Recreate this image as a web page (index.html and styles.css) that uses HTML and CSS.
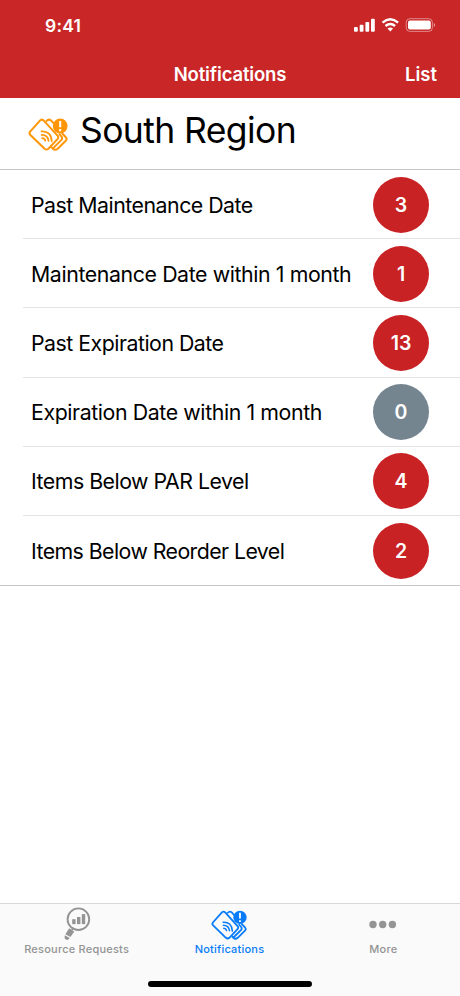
FILE: index.html
```html
<!DOCTYPE html>
<html lang="en">
<head>
<meta charset="utf-8">
<title>Notifications</title>
<link rel="stylesheet" href="styles.css">
</head>
<body>
<svg class="defs" aria-hidden="true">
  <symbol id="tags" viewBox="8 13 40 33">
    <g fill="none" stroke="currentColor" stroke-width="2" stroke-linejoin="round" stroke-linecap="round">
      <path d="M20.4 15.2 10.1 26.7Q8.8 28.4 10.4 30L24.6 43.7Q26.6 45.3 28.4 43.7L37.7 33.9Q38.9 32.3 37.5 30.7L24 15.8Q22.1 13.8 20.4 15.2Z"/>
      <path d="M26.6 15.9Q28.8 13.5 31 15.5L33.8 18.4"/>
      <path d="M42.3 28.5 46 32.5Q47.2 34 46 35.5L37.7 43.7Q35 45.8 32.9 43.7L31.9 42.6M39.4 29.2 41.5 31.7Q42.8 33.3 41.5 34.9L33.2 43.1"/>
      <path d="M21.5 26.4Q31.3 26 31.7 36.3M21.7 29.9Q27.8 30 28.5 35.8M22.2 33.2Q24.8 33.4 25.3 35.7" stroke-width="1.7"/>
    </g>
    <circle cx="40.2" cy="21" r="7.4" fill="currentColor"/>
    <path d="M40.2 16v6.2M40.2 24.1v2.2" fill="none" stroke="#fff" stroke-width="2"/>
  </symbol>
</svg>
<header class="top">
  <div class="status">
    <span class="time">9:41</span>
    <svg class="system" viewBox="0 0 82 16" width="82" height="16">
      <g fill="#fff">
        <rect x="0" y="10.1" width="3.8" height="4.6" rx="1"/>
        <rect x="5.7" y="7.8" width="3.8" height="6.9" rx="1"/>
        <rect x="11.4" y="5" width="3.8" height="9.7" rx="1"/>
        <rect x="17" y="1.8" width="3.8" height="12.9" rx="1"/>
        <path d="M36.3 14.4 33.5 11.6Q36.3 9.4 39.1 11.6Z"/>
        <rect x="54" y="3.4" width="22.8" height="9.2" rx="2"/>
      </g>
      <path d="M28.5 5.6Q36.3-1.1 44.1 5.6M31.5 9Q36.3 5 41.1 9" fill="none" stroke="#fff" stroke-width="2.4"/>
      <rect x="52.2" y="1.7" width="26.2" height="12.7" rx="3.7" fill="none" stroke="#fff" stroke-opacity=".45"/>
      <path d="M79.8 5.9v4.2q1.4-.6 1.4-2.1t-1.4-2.1" fill="#fff" fill-opacity=".5"/>
    </svg>
  </div>
  <nav class="nav">
    <h1 class="title">Notifications</h1>
    <a class="list-link">List</a>
  </nav>
</header>
<main>
  <div class="region">
    <svg class="region-icon"><use href="#tags"/></svg>
    <h2 class="region-name">South Region</h2>
  </div>
  <ul class="rows">
    <li class="row"><span class="label">Past Maintenance Date</span><span class="badge">3</span></li>
    <li class="row"><span class="label wide">Maintenance Date within 1 month</span><span class="badge">1</span></li>
    <li class="row"><span class="label">Past Expiration Date</span><span class="badge">13</span></li>
    <li class="row"><span class="label wide">Expiration Date within 1 month</span><span class="badge zero">0</span></li>
    <li class="row"><span class="label">Items Below PAR Level</span><span class="badge">4</span></li>
    <li class="row"><span class="label tight">Items Below Reorder Level</span><span class="badge">2</span></li>
  </ul>
</main>
<footer class="tabs">
  <div class="tab-list">
    <a class="tab">
      <svg class="tab-icon" viewBox="0 0 32 36" width="32" height="36">
        <circle cx="17.4" cy="14.2" r="10.8" fill="none" stroke="currentColor" stroke-width="1.9"/>
        <g fill="currentColor">
          <rect x="11.2" y="14.2" width="3.4" height="4.9"/>
          <rect x="16" y="12" width="3.4" height="7.1"/>
          <rect x="20.8" y="9.1" width="3.4" height="10"/>
          <path d="M8.2 23.3 13.3 26.4 9.4 32 4.4 29.2Z"/>
          <path d="M3.9 30.2 8.6 33Q6.8 35.8 4.8 34.5 2.8 32.9 3.9 30.2Z"/>
        </g>
        <path d="M11 24.8 12.4 22.4" stroke="currentColor" stroke-width="2"/>
      </svg>
      <span class="tab-label">Resource Requests</span>
    </a>
    <a class="tab active">
      <svg class="tab-icon tags-icon"><use href="#tags"/></svg>
      <span class="tab-label">Notifications</span>
    </a>
    <a class="tab">
      <svg class="tab-icon" viewBox="0 0 32 36" width="32" height="36">
        <g fill="currentColor"><circle cx="6" cy="19.5" r="3.7"/><circle cx="15.7" cy="19.5" r="3.7"/><circle cx="25.4" cy="19.5" r="3.7"/></g>
      </svg>
      <span class="tab-label">More</span>
    </a>
  </div>
  <div class="home"></div>
</footer>
</body>
</html>
```
FILE: styles.css
```css
* { box-sizing: border-box; }
body {
  margin: 0;
  height: 996px;
  display: flex;
  flex-direction: column;
  background: #fff;
  color: #000;
  font-family: Inter, sans-serif;
  overflow: hidden;
}
.defs { position: absolute; width: 0; height: 0; }
.top { height: 98px; background: #c82627; color: #fff; }
.status {
  height: 50px;
  padding: 0 24px 0 45px;
  display: flex;
  justify-content: space-between;
  align-items: center;
}
.time { font-size: 17.5px; font-weight: 600; letter-spacing: .2px; }
.system { display: block; }
.nav {
  height: 48px;
  padding-right: 23px;
  display: grid;
  grid-template-columns: 1fr auto 1fr;
  align-items: center;
}
.title { grid-column: 2; margin: 0 -11px 0 12px; font-size: 18.5px; font-weight: 600; letter-spacing: -.15px; }
.list-link { justify-self: end; font-size: 18.5px; font-weight: 600; }
main { flex: 1; }
.region {
  height: 72px;
  padding: 0 0 5px 28px;
  display: flex;
  align-items: center;
  border-bottom: 1px solid #c6c6c8;
}
.region-icon { width: 40px; height: 33px; color: #ff9608; margin-top: 6px; }
.region-name { margin: 0 0 2px 12px; font-size: 35.5px; font-weight: 400; letter-spacing: -.6px; }
.rows { list-style: none; margin: 0; padding: 0; border-bottom: 1px solid #c6c6c8; }
.row {
  height: 69.2px;
  margin-left: 23px;
  padding: 1px 31px 0 8px;
  display: flex;
  align-items: center;
  justify-content: space-between;
  border-bottom: 1px solid #e4e4e6;
}
.row:last-child { border-bottom: 0; }
.label { font-size: 21.3px; letter-spacing: -.49px; white-space: nowrap; }
.wide { letter-spacing: -.39px; }
.tight { letter-spacing: -.56px; }
.badge {
  width: 56px;
  height: 56px;
  flex: none;
  border-radius: 50%;
  background: #c82224;
  color: #fff;
  display: grid;
  place-items: center;
  font-size: 19.5px;
  font-weight: 600;
}
.zero { background: #758590; }
.tabs { height: 93px; border-top: 1px solid #d7d7d7; background: #fafafa; }
.tab-list { display: grid; grid-template-columns: repeat(3, 1fr); }
.tab { display: flex; flex-direction: column; align-items: center; color: #949494; }
.active { color: #087cf8; }
.tab-icon { display: block; height: 36px; width: 32px; margin-top: 1px; }
.tags-icon { width: 36px; height: 30px; margin: 6px 2px 1px 0; }
.tab-label { font-size: 11px; line-height: 16px; font-weight: 500; letter-spacing: .22px; }
.active .tab-label { padding-right: 1px; }
.home { width: 164px; height: 6px; margin: 24px auto 0; border-radius: 3px; background: #000; }
```
